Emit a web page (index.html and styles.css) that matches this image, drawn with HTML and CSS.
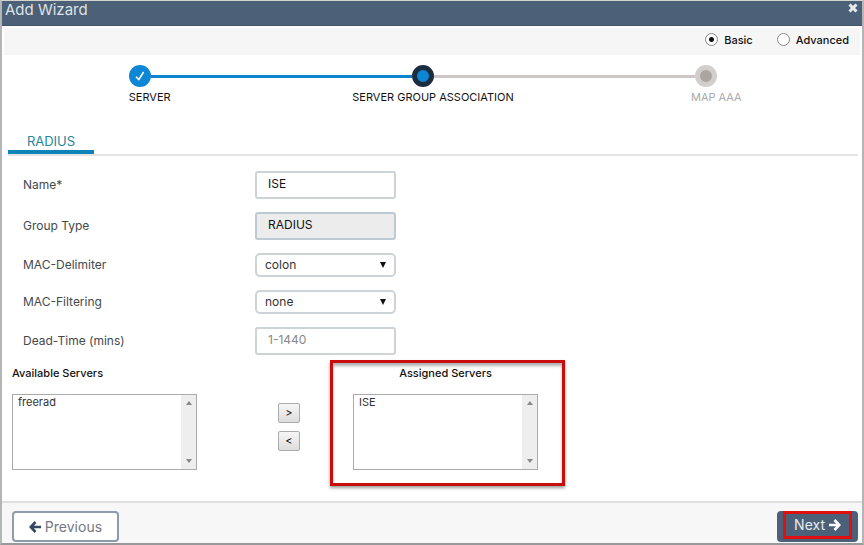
FILE: index.html
```html
<!DOCTYPE html>
<html lang="en">
<head>
    <meta charset="UTF-8">
    <meta name="viewport" content="width=device-width, initial-scale=1.0">
    <title>Add Wizard</title>
    <link rel="stylesheet" href="styles.css">
</head>
<body>
    <form class="wizard">
        <header class="wizard-header">
            <h1>Add Wizard</h1>
            <button type="button" class="close-btn" aria-label="Close">
                <svg width="10" height="10" viewBox="0 0 10 10"><path d="M1.5 1.5 8.5 8.5M8.5 1.5 1.5 8.5" stroke="#e8ebee" stroke-width="3"/></svg>
            </button>
        </header>

        <div class="mode-bar">
            <label><input type="radio" name="mode" checked> Basic</label>
            <label><input type="radio" name="mode"> Advanced</label>
        </div>

        <ol class="steps">
            <li class="step done">
                <div class="step-track">
                    <span class="line none"></span>
                    <span class="dot">
                        <svg width="12" height="12" viewBox="0 0 12 12"><path d="M2 6.8 4.8 9.6 9.6 2" fill="none" stroke="#fff" stroke-width="1.6"/></svg>
                    </span>
                    <span class="line after blue"></span>
                </div>
                <span class="step-label">SERVER</span>
            </li>
            <li class="step current">
                <div class="step-track">
                    <span class="line blue"></span>
                    <span class="dot"></span>
                    <span class="line after"></span>
                </div>
                <span class="step-label">SERVER GROUP ASSOCIATION</span>
            </li>
            <li class="step pending">
                <div class="step-track">
                    <span class="line"></span>
                    <span class="dot"></span>
                    <span class="line after none"></span>
                </div>
                <span class="step-label">MAP AAA</span>
            </li>
        </ol>

        <nav class="tabs">
            <a href="#radius" class="tab">RADIUS</a>
        </nav>

        <main id="radius">
            <div class="fields">
                <div class="field">
                    <label for="name">Name*</label>
                    <input type="text" id="name" value="ISE">
                </div>
                <div class="field">
                    <label for="type">Group Type</label>
                    <input type="text" id="type" value="RADIUS" readonly>
                </div>
                <div class="field">
                    <label for="delimiter">MAC-Delimiter</label>
                    <select id="delimiter"><option>colon</option></select>
                </div>
                <div class="field">
                    <label for="filtering">MAC-Filtering</label>
                    <select id="filtering"><option>none</option></select>
                </div>
                <div class="field">
                    <label for="deadtime">Dead-Time (mins)</label>
                    <input type="text" id="deadtime" placeholder="1-1440">
                </div>
            </div>

            <div class="servers">
                <div class="server-list">
                    <label for="available">Available Servers</label>
                    <div class="listbox">
                        <select id="available" size="4"><option>freerad</option></select>
                        <div class="scroll">
                            <svg width="6" height="4" viewBox="0 0 6 4"><path d="M0 4 3 0 6 4Z" fill="#888"/></svg>
                            <svg width="6" height="4" viewBox="0 0 6 4"><path d="M0 0 3 4 6 0Z" fill="#888"/></svg>
                        </div>
                    </div>
                </div>
                <div class="move">
                    <button type="button" aria-label="Assign">&gt;</button>
                    <button type="button" aria-label="Unassign">&lt;</button>
                </div>
                <div class="server-list assigned">
                    <label for="assigned">Assigned Servers</label>
                    <div class="listbox">
                        <select id="assigned" size="4"><option>ISE</option></select>
                        <div class="scroll">
                            <svg width="6" height="4" viewBox="0 0 6 4"><path d="M0 4 3 0 6 4Z" fill="#888"/></svg>
                            <svg width="6" height="4" viewBox="0 0 6 4"><path d="M0 0 3 4 6 0Z" fill="#888"/></svg>
                        </div>
                    </div>
                </div>
            </div>
        </main>

        <footer class="wizard-footer">
            <button type="button" class="prev-btn">
                <svg width="12" height="12" viewBox="0 0 12 12"><path d="M6.5 1 1.8 6 6.5 11M2 6H12" fill="none" stroke="#33485e" stroke-width="2.6"/></svg>
                Previous
            </button>
            <button type="button" class="next-btn">
                <span>Next
                <svg width="12" height="12" viewBox="0 0 12 12"><path d="M5.5 1 10.2 6 5.5 11M10 6H0" fill="none" stroke="#fff" stroke-width="2.6"/></svg></span>
            </button>
        </footer>
    </form>
</body>
</html>
```

FILE: styles.css
```css
* {
    margin: 0;
    padding: 0;
    box-sizing: border-box;
}

body {
    font-family: Inter, "Liberation Sans", sans-serif;
    font-size: 12px;
    color: #111;
    background: #fff;
}

button, input, select {
    font: inherit;
    color: inherit;
}

.wizard {
    display: flex;
    flex-direction: column;
    min-height: 100vh;
    border: 2px solid #b4b5b7;
    border-top: 1px solid #d5d5d0;
    border-bottom-color: #98999b;
}

/* header */
.wizard-header {
    display: flex;
    justify-content: space-between;
    align-items: flex-start;
    height: 25px;
    padding: 0 4px 0 3px;
    background: #4c6078;
    border-bottom: 1px solid #3f546b;
}

.wizard-header h1 {
    font-size: 15px;
    line-height: 18px;
    font-weight: 400;
    color: #dfe2e5;
}

.close-btn {
    height: 16px;
    border: none;
    background: none;
    line-height: 16px;
}

.mode-bar {
    display: flex;
    justify-content: flex-end;
    align-items: center;
    gap: 24px;
    height: 27px;
    margin: 2px 2px 0;
    padding: 0 11px 4px 0;
    background: #f6f6f6;
    font-size: 11px;
    font-weight: 500;
}

.mode-bar label {
    display: flex;
    align-items: center;
    gap: 6px;
}

.mode-bar input {
    appearance: none;
    width: 13px;
    height: 13px;
    border: 1px solid #888;
    border-radius: 50%;
    background: #fff;
}

.mode-bar input:checked {
    background: radial-gradient(circle, #111 0 2px, #fff 3px);
}

/* steps */
.steps {
    display: grid;
    grid-template-columns: repeat(3, 1fr);
    height: 70px;
    margin: 10px 4px 0 6px;
    list-style: none;
    text-align: center;
}

.step-track {
    display: flex;
    align-items: center;
}

.line {
    flex: 1 0 0px;
    height: 3px;
    background: #cdc8c6;
}

.line.after {
    flex-basis: 20px;
}

.line.blue {
    background: #0c84ce;
}

.line.none {
    background: none;
}

.dot {
    display: flex;
    align-items: center;
    justify-content: center;
    width: 22px;
    height: 22px;
    border-radius: 50%;
    background: #0d87d5;
}

.current .dot {
    border: 5px solid #1d2d40;
}

.pending .dot {
    border: 5px solid #d2cecb;
    background: #a9a5a3;
}

.step-label {
    display: block;
    margin-top: 3px;
    font-size: 11px;
    line-height: 14px;
}

.pending .step-label {
    color: #aaa;
}

/* tabs */
.tabs {
    display: flex;
    margin: 0 4px 0 6px;
    padding-top: 1px;
    border-bottom: 2px solid #e4e4e4;
}

.tab {
    width: 86px;
    height: 18px;
    border-bottom: 4px solid #0e83b9;
    font-size: 13px;
    line-height: 10px;
    text-align: center;
    color: #23889c;
    text-decoration: none;
}

/* form */
.fields {
    display: flex;
    flex-direction: column;
    gap: 13px;
    padding: 15px 21px 0;
}

.field {
    display: grid;
    grid-template-columns: 232px 141px;
    align-items: center;
}

.field label {
    padding-bottom: 1px;
    color: #44494d;
}

.field input,
.field select {
    height: 28px;
    padding: 0 11px 3px;
    border: 2px solid #ccd4d8;
    border-radius: 3px;
    background: #fff;
}

.field input[readonly] {
    background: #ececec;
    border-color: #bdc9d3;
}

.field input::placeholder {
    color: #888;
}

.field select {
    height: 24px;
    padding: 0 8px 1px;
    border-radius: 5px;
    appearance: none;
    color: #333;
    background: #fff url("data:image/svg+xml,%3Csvg xmlns='http://www.w3.org/2000/svg' width='6' height='6'%3E%3Cpath d='M0 0H6L3 6Z' fill='%23111'/%3E%3C/svg%3E") no-repeat right 8px center;
}

.servers {
    display: flex;
    padding: 5px 10px 0;
}

.server-list {
    display: flex;
    flex-direction: column;
    gap: 13px;
    padding-top: 5px;
}

.server-list label {
    font-size: 11px;
    line-height: 16px;
    font-weight: 500;
}

.listbox {
    display: flex;
    width: 185px;
    height: 76px;
    border: 1px solid #aaa;
}

.listbox select {
    flex: 1;
    min-width: 0;
    border: none;
    outline: none;
    background: #fff;
    font-size: 11px;
    color: #333;
    overflow: hidden;
}

.listbox option {
    min-height: 0;
    padding: 0 5px;
    line-height: 12px;
}

.scroll {
    display: flex;
    flex-direction: column;
    justify-content: space-between;
    align-items: center;
    width: 15px;
    padding: 6px 0;
    background: #eee;
}

.move {
    display: flex;
    flex-direction: column;
    gap: 8px;
    padding: 43px 30px 0 81px;
}

.move button {
    width: 22px;
    height: 20px;
    border: 1px solid #aaa;
    border-radius: 2px;
    background: linear-gradient(#f6f6f6, #ddd);
    font-size: 11px;
    line-height: 14px;
}

.assigned {
    padding: 2px 24px 13px 20px;
    border: 3px solid #c90d0d;
    box-shadow: 0 2px 3px rgba(0, 0, 0, 0.4), inset 0 3px 3px rgba(0, 0, 0, 0.3);
}

.assigned label {
    text-align: center;
}

/* footer */
.wizard-footer {
    display: flex;
    justify-content: space-between;
    margin-top: auto;
    padding: 8px 4px 1px 10px;
    border-top: 2px solid #dfdfe0;
    background: #f7f7f7;
}

.prev-btn,
.next-btn {
    height: 31px;
    border-radius: 4px;
    font-size: 14px;
}

.prev-btn {
    width: 107px;
    padding-bottom: 1px;
    border: 2px solid #8f9baa;
    background: #fff;
    color: #737a80;
}

.prev-btn svg,
.next-btn svg {
    vertical-align: -1px;
}

.next-btn {
    width: 81px;
    padding-bottom: 3px;
    border: none;
    background: #4c6078;
    color: #e8ebee;
}

.next-btn span {
    display: block;
    margin: 0 6px;
    border: 3px solid #e01010;
    line-height: 22px;
}
```
